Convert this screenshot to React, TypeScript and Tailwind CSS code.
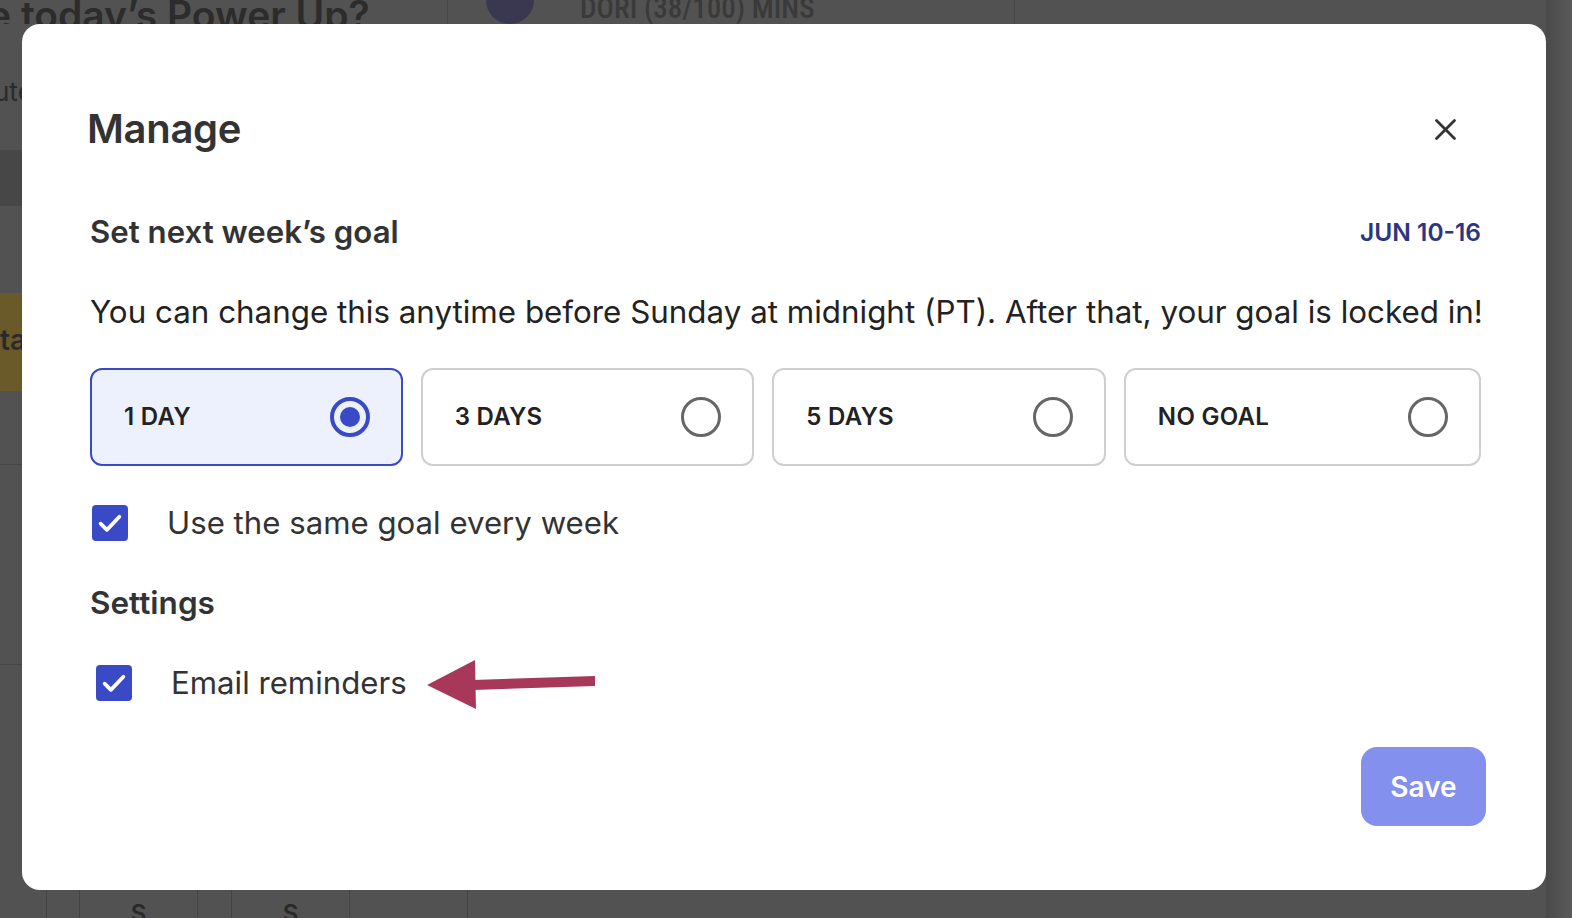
import React, { useState } from 'react';

const font = { fontFamily: 'Inter, "Noto Sans", sans-serif' };

const GOALS = ['1 DAY', '3 DAYS', '5 DAYS', 'NO GOAL'];

const Radio: React.FC<{ checked: boolean }> = ({ checked }) =>
  checked ? (
    <span className="flex h-[40px] w-[40px] shrink-0 items-center justify-center rounded-full border-[4px] border-[#3a4ac6]">
      <span className="h-[20px] w-[20px] rounded-full bg-[#3a4ac6]" />
    </span>
  ) : (
    <span className="h-[40px] w-[40px] shrink-0 rounded-full border-[3px] border-[#666666]" />
  );

const Checkbox: React.FC<{ checked: boolean }> = ({ checked }) => (
  <span
    className={`flex h-[36px] w-[36px] shrink-0 items-center justify-center rounded-[4px] ${
      checked ? 'bg-[#3a4ac6]' : 'border-2 border-[#666]'
    }`}
  >
    {checked && (
      <svg width="30" height="30" viewBox="0 0 24 24" fill="none" stroke="white" strokeWidth="3" strokeLinecap="round" strokeLinejoin="round">
        <path d="M4.5 12.5l5 5L19.5 7" />
      </svg>
    )}
  </span>
);

// the pointer arrow drawn over the screenshot
const Arrow = () => (
  <svg width="172" height="56" viewBox="0 0 172 56" className="ml-[18px] mt-[2px] shrink-0">
    <polygon points="2,29 50,4 51,53" fill="#a8385a" />
    <polygon points="48,24 170,20 170,30 48,34" fill="#a8385a" />
  </svg>
);

const Backdrop = () => (
  <div className="relative h-[918px] w-[1572px] overflow-hidden bg-[#525252]" style={font}>
    {/* faded page behind the dialog */}
    <div className="flex h-[24px]">
      <div className="w-[448px] overflow-hidden border-r border-[#474747]">
        <span className="-ml-[12px] -mt-[14px] block whitespace-nowrap text-[39px] font-semibold text-[#2c2c2c]">e today’s Power Up?</span>
      </div>
      <div className="flex w-[567px] items-start gap-[46px] overflow-hidden border-r border-[#474747] pl-[38px]">
        <span className="-mt-[24px] h-[48px] w-[48px] rounded-full bg-[#3a3850]" />
        <span className="-mt-[13px] whitespace-nowrap text-[29px] font-medium text-[#3a3a3a]" style={{ fontFamily: '"Roboto", sans-serif', fontStretch: 'condensed' }}>
          DORI (38/100) MINS
        </span>
      </div>
    </div>
    <div className="flex w-[22px] flex-col">
      <div className="h-[126px] overflow-hidden whitespace-nowrap pt-[48px] text-[26px] text-[#2a2a2a]">
        <span className="-ml-[6px] block">ute</span>
      </div>
      <div className="h-[56px] bg-[#474747]" />
      <div className="h-[87px]" />
      <div className="h-[98px] overflow-hidden bg-[#6a5a2a] pt-[26px] text-[28px] font-semibold text-[#2a2a2a]">ta</div>
      <div className="h-[74px] border-b border-[#474747]" />
      <div className="h-[200px] border-b border-[#474747]" />
    </div>
    <div className="absolute bottom-0 left-0 flex h-[28px]">
      {[47, 33, 118, 34, 118, 118].map((w, i) => (
        <div key={i} className="border-r border-[#444] pt-[6px] text-center text-[24px] font-semibold text-[#2a2a2a]" style={{ width: w }}>
          {i === 2 || i === 4 ? 'S' : ''}
        </div>
      ))}
    </div>
    <div className="absolute right-0 top-0 h-full w-[26px] bg-gradient-to-r from-[#4a4a4a] to-[#5a5a5a]" />
  </div>
);

export default function App() {
  const [goal, setGoal] = useState(0);
  const [sameGoal, setSameGoal] = useState(true);
  const [emails, setEmails] = useState(true);

  return (
    <div className="relative h-[918px] w-[1572px] overflow-hidden" style={font}>
      <Backdrop />
      <div className="absolute inset-0 pl-[22px] pt-[24px]">
        <div className="flex h-[866px] w-[1524px] flex-col rounded-[18px] bg-white pl-[68px] pr-[60px] pt-[73px] text-[#333]">
          <div className="flex h-[64px] items-center justify-between pr-[5px]">
            <h1 className="-ml-[3px] text-[40px] font-semibold tracking-[-0.3px] text-[#333]">Manage</h1>
            <button className="mr-[19px] flex h-[34px] w-[34px] items-center justify-center text-[#333]">
              <svg width="27" height="27" viewBox="0 0 24 24" fill="none" stroke="currentColor" strokeWidth="2.5" strokeLinecap="round">
                <path d="M4 4l16 16M20 4L4 20" />
              </svg>
            </button>
          </div>

          <div className="mt-[51px] flex h-[40px] items-center justify-between pr-[5px]">
            <h2 className="text-[31.2px] font-semibold text-[#333]">Set next week’s goal</h2>
            <span className="text-[24.5px] font-semibold text-[#2e3580]">JUN 10-16</span>
          </div>

          <p className="mt-[40px] flex h-[40px] items-center whitespace-nowrap text-[31.35px] text-[#222]">
            You can change this anytime before Sunday at midnight (PT). After that, your goal is locked in!
          </p>

          <div className="mt-[36px] flex h-[98px] gap-[18px] pr-[5px]">
            {GOALS.map((g, i) => (
              <button
                key={g}
                onClick={() => setGoal(i)}
                className={`flex flex-auto items-center justify-between rounded-[12px] border-2 pl-[32px] pr-[31px] ${
                  goal === i ? 'border-[#3a4ac6] bg-[#edf1fd]' : 'border-[#cfcfcf] bg-white'
                }`}
              >
                <span className="text-[24px] font-semibold tracking-[0.3px] text-[#222]">{g}</span>
                <Radio checked={goal === i} />
              </button>
            ))}
          </div>

          <label className="mt-[37px] flex h-[40px] cursor-pointer items-center pl-[2px]" onClick={() => setSameGoal(!sameGoal)}>
            <Checkbox checked={sameGoal} />
            <span className="ml-[39px] text-[31.2px] text-[#333]">Use the same goal every week</span>
          </label>

          <h3 className="mt-[40px] flex h-[40px] items-center text-[31.5px] font-semibold text-[#333]">Settings</h3>

          <div className="mt-[40px] flex h-[40px] items-center pl-[6px]">
            <label className="flex cursor-pointer items-center" onClick={() => setEmails(!emails)}>
              <Checkbox checked={emails} />
              <span className="ml-[39px] text-[31.2px] text-[#333]">Email reminders</span>
            </label>
            <Arrow />
          </div>

          <div className="mt-[44px] flex justify-end">
            <button className="h-[79px] w-[125px] rounded-[16px] bg-[#8490ee] text-[28px] font-semibold text-white">Save</button>
          </div>
        </div>
      </div>
    </div>
  );
}
